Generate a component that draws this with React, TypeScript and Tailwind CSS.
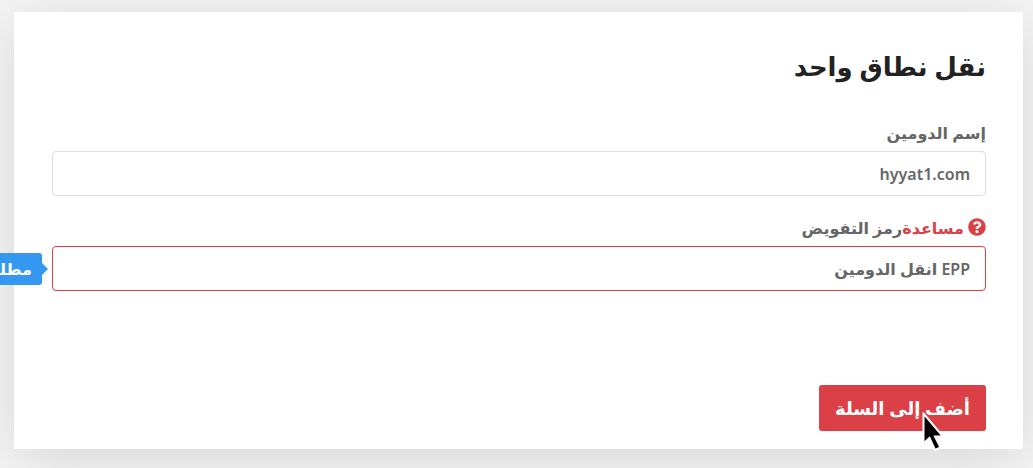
import { FaQuestionCircle } from 'react-icons/fa';

const arabicFont = "font-['Noto_Sans','DejaVu_Sans',sans-serif]";
const inputBase = 'block w-full h-[45px] rounded-[4px] border bg-white px-[15px] text-base font-semibold text-[#666] placeholder:text-[#666] placeholder:opacity-100 outline-none';

function Cursor() {
  return (
    <svg className="absolute left-[102px] top-[27px] pointer-events-none" width="24" height="42" viewBox="0 0 24 42" aria-hidden="true">
      <path d="M2.5 1.5 V31.5 L8.5 26 L14 38 L19.5 35.5 L14 24.5 H22 Z" fill="#000" stroke="#fff" strokeWidth="2" />
    </svg>
  );
}

export default function App() {
  return (
    <div dir="rtl" className={`min-h-screen overflow-hidden bg-[#f4f4f4] pt-3 pr-[10px] pl-[14px] pb-[19px] text-[#666] ${arabicFont}`}>
      <form
        onSubmit={e => e.preventDefault()}
        className="rounded-[2px] bg-white pt-[34px] pr-[37px] pl-[38px] pb-[18px] shadow-[0_10px_60px_rgba(0,0,0,0.12)]"
      >
        <h1 className="text-[26px] leading-10 font-bold text-[#222]">نقل نطاق واحد</h1>

        <div className="mt-[35px]">
          <label htmlFor="domain" className="block h-[30px] text-base leading-6 font-semibold">إسم الدومين</label>
          <input id="domain" type="text" defaultValue="hyyat1.com" className={`${inputBase} border-[#ddd]`} />
        </div>

        <div className="mt-5">
          <div className="flex h-[30px] items-start text-base leading-6 font-semibold">
            <a href="#help" className="flex items-start text-[#da4045]">
              <FaQuestionCircle className="mt-[2px] ml-1 size-[18px]" />
              مساعدة
            </a>
            <label htmlFor="epp">رمز التفويض</label>
          </div>
          <div className="relative">
            <input id="epp" type="text" placeholder="EPP انقل الدومين" className={`${inputBase} border-[#da4045]`} />
            <div role="tooltip" className="absolute right-full top-[7px] mr-[10px] h-8 rounded-[3px] bg-[#3498f0] px-[10px] text-base leading-8 font-bold whitespace-nowrap text-white">
              مطلوب
              <span className="absolute left-full top-[10px] border-y-[6px] border-l-[6px] border-y-transparent border-l-[#3498f0]" />
            </div>
          </div>
        </div>

        <div className="relative mt-[94px] w-fit">
          <button type="submit" className="block h-[46px] w-[167px] rounded-[3px] bg-[#da4045] text-lg font-bold text-white">
            أضف إلى السلة
          </button>
          <Cursor />
        </div>
      </form>
    </div>
  );
}
